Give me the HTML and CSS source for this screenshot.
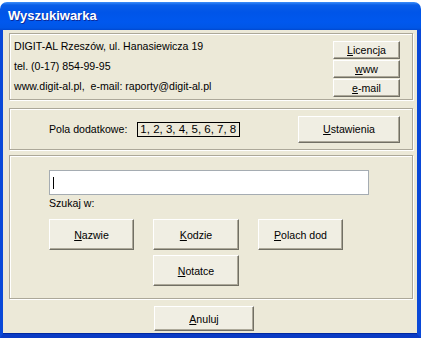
FILE: index.html
```html
<!DOCTYPE html>
<html lang="pl">
<head>
    <meta charset="UTF-8">
    <title>Wyszukiwarka</title>
    <link rel="stylesheet" href="styles.css">
</head>
<body>
    <div class="window">
        <div class="titlebar">Wyszukiwarka</div>
        <div class="client">
            <!-- dane firmy -->
            <div class="group info">
                <div class="info-text">
                    <div>DIGIT-AL Rzeszów, ul. Hanasiewicza 19</div>
                    <div>tel. (0-17) 854-99-95</div>
                    <div>www.digit-al.pl,&nbsp; e-mail: raporty@digit-al.pl</div>
                </div>
                <div class="info-buttons">
                    <button class="btn small"><u>L</u>icencja</button>
                    <button class="btn small"><u>w</u>ww</button>
                    <button class="btn small"><u>e</u>-mail</button>
                </div>
            </div>

            <!-- pola dodatkowe -->
            <div class="group fields">
                <span class="fields-label">Pola dodatkowe:</span>
                <span class="fields-box">1, 2, 3, 4, 5, 6, 7, 8</span>
                <button class="btn settings"><u>U</u>stawienia</button>
            </div>

            <!-- szukanie -->
            <div class="group search">
                <div class="search-input"><span class="caret"></span></div>
                <div class="search-label">Szukaj w:</div>
                <div class="search-buttons">
                    <button class="btn big"><u>N</u>azwie</button>
                    <button class="btn big"><u>K</u>odzie</button>
                    <button class="btn big"><u>P</u>olach dod</button>
                    <button class="btn big notes"><u>N</u>otatce</button>
                </div>
            </div>

            <div class="footer">
                <button class="btn cancel"><u>A</u>nuluj</button>
            </div>
        </div>
    </div>
</body>
</html>
```

FILE: styles.css
```css
body {
    margin: 0;
    background: #fff;
    font-family: "Liberation Sans", Arial, sans-serif;
    font-size: 10.6px;
    color: #000;
}
.window {
    width: 421px;
    margin-top: 2px;
}
.titlebar {
    height: 28px;
    line-height: 28px;
    padding-left: 8px;
    border-radius: 7px 7px 0 0;
    background: linear-gradient(to bottom, #3d8ffa 0, #0a5ee8 3px, #0055e8 10px, #0058ee 20px, #0056e6 26px, #0048d0 28px);
    color: #fff;
    font-weight: bold;
    font-size: 13px;
    text-shadow: 1px 1px 0 #0b2a9a;
}
.client {
    height: 301px;
    background: #ece9d8;
    border-left: 3px solid #0a49d8;
    border-right: 4px solid #0a49d8;
    border-bottom: 4px solid #0a3bc4;
    box-shadow: inset 0 -1px 0 #0028a0;
    padding-top: 3px;
}
.group {
    margin: 0 4px 0 6px;
    border: 1px solid #aca899;
    box-shadow: inset 1px 1px 0 #fff, 1px 1px 0 #fff;
}
.btn {
    font-family: "Liberation Sans", Arial, sans-serif;
    font-size: 10.6px;
    color: #000;
    background: #f0eee3;
    border: 1px solid;
    border-color: #fff #716f64 #716f64 #fff;
    box-shadow: inset -1px -1px 0 #aca899;
    padding: 0;
    display: block;
}
.info {
    height: 65px;
    display: flex;
    justify-content: space-between;
}
.info-text {
    padding: 2px 0 0 4px;
    line-height: 20px;
}
.info-buttons {
    padding: 7px 12px 0 0;
    display: flex;
    flex-direction: column;
    gap: 1px;
}
.btn.small {
    width: 67px;
    height: 18px;
}
.fields {
    margin-top: 8px;
    height: 40px;
    display: flex;
    align-items: center;
    padding-left: 39px;
    padding-right: 12px;
}
.fields-label {
    margin-right: 10px;
}
.fields-box {
    border: 1px solid #000;
    height: 15px;
    line-height: 13px;
    font-size: 11.5px;
    padding: 0 2px;
    box-sizing: border-box;
    width: 103px;
}
.btn.settings {
    margin-left: auto;
    width: 102px;
    height: 27px;
}
.search {
    margin-top: 5px;
    height: 128px;
    padding: 14px 0 0 39px;
}
.search-input {
    width: 320px;
    height: 25px;
    box-sizing: border-box;
    background: #fff;
    border: 1px solid #a5acb2;
    padding: 6px 0 0 3px;
}
.caret {
    display: block;
    width: 1px;
    height: 12px;
    background: #000;
}
.search-label {
    margin-top: 1px;
    line-height: 14px;
}
.search-buttons {
    margin-top: 9px;
    display: grid;
    grid-template-columns: 85px 86px 85px;
    column-gap: 19px;
    row-gap: 5px;
}
.btn.big {
    height: 31px;
}
.btn.notes {
    grid-column: 2;
}
.footer {
    padding: 7px 0 0 151px;
}
.btn.cancel {
    width: 100px;
    height: 25px;
}
```
